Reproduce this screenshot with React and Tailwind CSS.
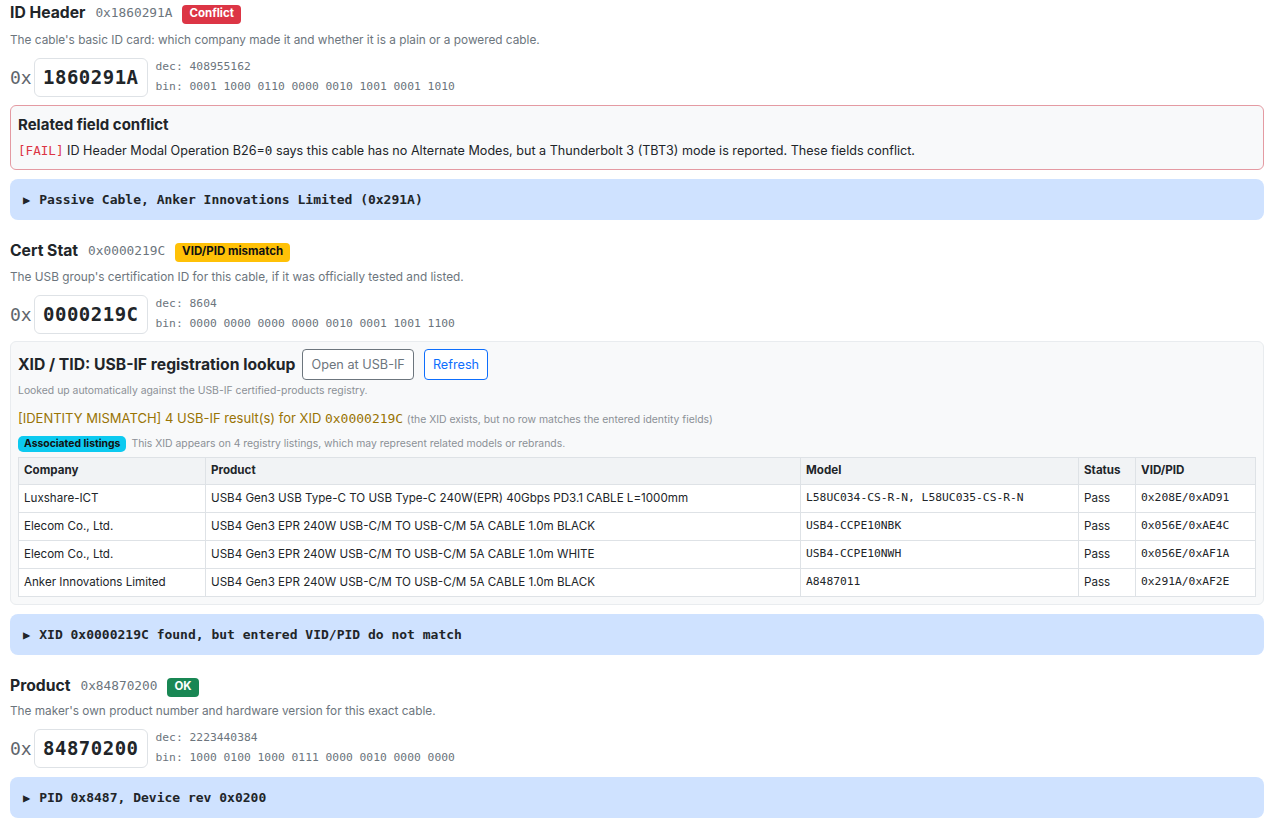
import React from "react";

const sans = "font-['Inter','Liberation_Sans',sans-serif]";
const mono = "font-['DejaVu_Sans_Mono','Liberation_Mono',monospace]";

const badgeColors = {
  red: "bg-[#dc3545] text-white",
  yellow: "bg-[#ffc107] text-[#111]",
  green: "bg-[#198754] text-white",
};

function SectionHeader({ title, hex, badge, color }) {
  return (
    <div className="flex items-center h-[20px]">
      <span className="text-[15.7px] font-bold text-[#212529]">{title}</span>
      <span className={`${mono} text-[12.8px] text-[#6c757d] ml-[10px]`}>{hex}</span>
      <span
        className={`ml-[10px] mt-[2px] px-[7px] h-[19px] flex items-center rounded-[4px] text-[11.5px] font-bold ${badgeColors[color]}`}
      >
        {badge}
      </span>
    </div>
  );
}

function HexRow({ value, dec, bin }) {
  return (
    <div className="flex items-center mt-[9px]">
      <span className={`${mono} text-[18px] text-[#5f666d] w-[24px]`}>0x</span>
      <div
        className={`${mono} h-[39px] px-[8px] flex items-center bg-white border border-[#dee2e6] rounded-[6px] text-[19px] font-bold text-[#212529] tracking-[0.5px]`}
      >
        {value}
      </div>
      <div className={`${mono} text-[11.3px] text-[#6c757d] ml-[8px] leading-[20px]`}>
        <div>dec: {dec}</div>
        <div>bin: {bin}</div>
      </div>
    </div>
  );
}

function Collapsed({ children, className = "" }) {
  return (
    <div
      className={`h-[41px] flex items-center px-[13px] bg-[#cfe2ff] rounded-[8px] ${mono} text-[13px] font-bold text-[#212529] ${className}`}
    >
      <span className="text-[12px] mr-[9px]">▶</span>
      {children}
    </div>
  );
}

const rows = [
  {
    company: "Luxshare-ICT",
    product: "USB4 Gen3 USB Type-C TO USB Type-C 240W(EPR) 40Gbps PD3.1 CABLE L=1000mm",
    model: "L58UC034-CS-R-N, L58UC035-CS-R-N",
    vidpid: "0x208E/0xAD91",
  },
  {
    company: "Elecom Co., Ltd.",
    product: "USB4 Gen3 EPR 240W USB-C/M TO USB-C/M 5A CABLE 1.0m BLACK",
    model: "USB4-CCPE10NBK",
    vidpid: "0x056E/0xAE4C",
  },
  {
    company: "Elecom Co., Ltd.",
    product: "USB4 Gen3 EPR 240W USB-C/M TO USB-C/M 5A CABLE 1.0m WHITE",
    model: "USB4-CCPE10NWH",
    vidpid: "0x056E/0xAF1A",
  },
  {
    company: "Anker Innovations Limited",
    product: "USB4 Gen3 EPR 240W USB-C/M TO USB-C/M 5A CABLE 1.0m BLACK",
    model: "A8487011",
    vidpid: "0x291A/0xAF2E",
  },
];

export default function App() {
  return (
    <div className={`${sans} bg-white min-h-[827px] pl-[10px] pr-[16px] pt-[3px] text-[#212529]`}>
      {/* ID Header */}
      <SectionHeader title="ID Header" hex="0x1860291A" badge="Conflict" color="red" />
      <p className="text-[11.8px] leading-[16px] text-[#6c757d] mt-[9px]">
        The cable's basic ID card: which company made it and whether it is a plain or a powered cable.
      </p>
      <HexRow value="1860291A" dec="408955162" bin="0001 1000 0110 0000 0010 1001 0001 1010" />

      <div className="mt-[8px] h-[65px] border border-[#e49aa2] bg-[#f8f9fa] rounded-[6px] px-[7px] pt-[9px]">
        <div className="text-[15px] leading-[20px] font-bold">Related field conflict</div>
        <div className="text-[12.6px] leading-[20px] mt-[6px]">
          <span className={`${mono} text-[#dc3545]`}>[FAIL]</span> ID Header Modal Operation B26=<span className={mono}>0</span> says
          this cable has no Alternate Modes, but a Thunderbolt 3 (TBT3) mode is reported. These fields conflict.
        </div>
      </div>

      <Collapsed className="mt-[9px]">Passive Cable, Anker Innovations Limited (0x291A)</Collapsed>

      {/* Cert Stat */}
      <div className="mt-[21px]">
        <SectionHeader title="Cert Stat" hex="0x0000219C" badge="VID/PID mismatch" color="yellow" />
      </div>
      <p className="text-[11.8px] leading-[16px] text-[#6c757d] mt-[8px]">
        The USB group's certification ID for this cable, if it was officially tested and listed.
      </p>
      <HexRow value="0000219C" dec="8604" bin="0000 0000 0000 0000 0010 0001 1001 1100" />

      <div className="mt-[7px] border border-[#e9ecef] bg-[#f8f9fa] rounded-[6px] px-[7px] pt-[7px] pb-[7px]">
        <div className="flex items-center h-[31px]">
          <span className="text-[15.7px] font-bold">XID / TID: USB-IF registration lookup</span>
          <button className="ml-[7px] h-[31px] px-[8px] border border-[#6c757d] rounded-[4px] text-[12.7px] text-[#6c757d] bg-white">
            Open at USB-IF
          </button>
          <button className="ml-[10px] h-[31px] px-[8px] border border-[#0d6efd] rounded-[4px] text-[12.7px] text-[#0d6efd] bg-white">
            Refresh
          </button>
        </div>
        <div className="text-[10.4px] leading-[14px] text-[#8b9096] mt-[4px]">
          Looked up automatically against the USB-IF certified-products registry.
        </div>
        <div className="text-[13px] leading-[18px] mt-[11px] text-[#997404]">
          [IDENTITY MISMATCH] 4 USB-IF result(s) for XID <span className={mono}>0x0000219C</span>{" "}
          <span className="text-[10.4px] text-[#8b9096]">
            (the XID exists, but no row matches the entered identity fields)
          </span>
        </div>
        <div className="flex items-center h-[16px] mt-[7px]">
          <span className="bg-[#0dcaf0] text-[#111] text-[10.4px] font-bold px-[6px] h-[16px] flex items-center rounded-[5px]">
            Associated listings
          </span>
          <span className="text-[10.4px] text-[#8b9096] ml-[5px]">
            This XID appears on 4 registry listings, which may represent related models or rebrands.
          </span>
        </div>
        <table className="mt-[5px] w-full table-fixed border-collapse bg-white text-[11.6px]">
          <colgroup>
            <col className="w-[187px]" />
            <col className="w-[595px]" />
            <col className="w-[278px]" />
            <col className="w-[57px]" />
            <col />
          </colgroup>
          <thead>
            <tr className="h-[27px] bg-[#f1f3f5]">
              {["Company", "Product", "Model", "Status", "VID/PID"].map((h) => (
                <th key={h} className="border border-[#dee2e6] px-[5px] text-left font-bold">
                  {h}
                </th>
              ))}
            </tr>
          </thead>
          <tbody>
            {rows.map((r, i) => (
              <tr key={i} className="h-[28px]">
                <td className="border border-[#dee2e6] px-[5px]">{r.company}</td>
                <td className="border border-[#dee2e6] px-[5px] whitespace-nowrap">{r.product}</td>
                <td className={`border border-[#dee2e6] px-[5px] ${mono} text-[11.3px]`}>{r.model}</td>
                <td className="border border-[#dee2e6] px-[5px] align-top pt-[5px]">Pass</td>
                <td className={`border border-[#dee2e6] px-[5px] ${mono} text-[11.3px]`}>{r.vidpid}</td>
              </tr>
            ))}
          </tbody>
        </table>
      </div>

      <Collapsed className="mt-[9px]">XID 0x0000219C found, but entered VID/PID do not match</Collapsed>

      {/* Product */}
      <div className="mt-[21px]">
        <SectionHeader title="Product" hex="0x84870200" badge="OK" color="green" />
      </div>
      <p className="text-[11.8px] leading-[16px] text-[#6c757d] mt-[7px]">
        The maker's own product number and hardware version for this exact cable.
      </p>
      <HexRow value="84870200" dec="2223440384" bin="1000 0100 1000 0111 0000 0010 0000 0000" />

      <Collapsed className="mt-[9px]">PID 0x8487, Device rev 0x0200</Collapsed>
    </div>
  );
}
